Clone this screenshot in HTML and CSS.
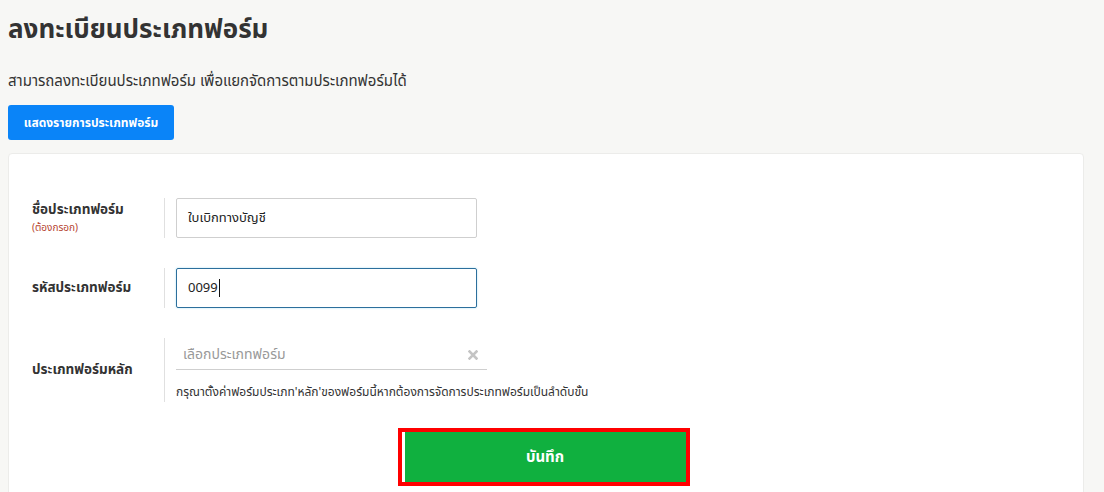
FILE: index.html
```html
<!DOCTYPE html>
<html lang="th">
<head>
<meta charset="utf-8">
<title>ลงทะเบียนประเภทฟอร์ม</title>
<link rel="stylesheet" href="styles.css">
</head>
<body>
<div class="page">
  <h1 class="title">ลงทะเบียนประเภทฟอร์ม</h1>
  <p class="subtitle">สามารถลงทะเบียนประเภทฟอร์ม เพื่อแยกจัดการตามประเภทฟอร์มได้</p>
  <button class="btn-list">แสดงรายการประเภทฟอร์ม</button>
  <div class="card">
    <div class="row">
      <div class="label">
        <div class="label-text">ชื่อประเภทฟอร์ม</div>
        <div class="required">(ต้องกรอก)</div>
      </div>
      <div class="field">
        <div class="input">ใบเบิกทางบัญชี</div>
      </div>
    </div>
    <div class="row">
      <div class="label">
        <div class="label-text">รหัสประเภทฟอร์ม</div>
      </div>
      <div class="field">
        <div class="input focus">0099<span class="caret"></span></div>
      </div>
    </div>
    <div class="row row-select">
      <div class="label">
        <div class="label-text">ประเภทฟอร์มหลัก</div>
      </div>
      <div class="field">
        <div class="select">
          <span class="placeholder">เลือกประเภทฟอร์ม</span>
          <svg class="clear" width="10" height="10" viewBox="0 0 10 10"><path d="M1.5 1.5 L8.5 8.5 M8.5 1.5 L1.5 8.5" stroke="#c4c4c4" stroke-width="2.6" stroke-linecap="square"/></svg>
        </div>
        <div class="help">กรุณาตั้งค่าฟอร์มประเภท'หลัก'ของฟอร์มนี้หากต้องการจัดการประเภทฟอร์มเป็นลำดับขั้น</div>
      </div>
    </div>
    <div class="actions">
      <div class="highlight">
        <button class="btn-save">บันทึก</button>
      </div>
    </div>
  </div>
</div>
</body>
</html>
```
FILE: styles.css
```css
html, body {
  margin: 0;
  padding: 0;
  background: #f7f7f5;
  font-family: Tahoma, "Noto Sans Thai", "Liberation Sans", "Noto Sans", sans-serif;
  color: #333;
}
.page {
  padding: 12px 20px 0 8px;
}
.title {
  margin: 0;
  font-size: 26px;
  font-weight: bold;
  line-height: 36px;
  color: #333;
}
.subtitle {
  margin: 24px 0 0;
  font-size: 15px;
  line-height: 20px;
}
.btn-list {
  margin-top: 13px;
  display: block;
  width: 166px;
  height: 35px;
  background: #0a84f8;
  border: none;
  border-radius: 3px;
  color: #fff;
  font-family: inherit;
  font-size: 12px;
  font-weight: bold;
  padding: 0;
}
.card {
  margin-top: 13px;
  background: #fff;
  border: 1px solid #ececea;
  border-radius: 4px;
  padding: 44px 24px 10px 23px;
}
.row {
  display: flex;
  align-items: stretch;
  margin-bottom: 30px;
}
.label {
  width: 132px;
  display: flex;
  flex-direction: column;
  justify-content: center;
  border-right: 1px solid #e0e0e0;
}
.label-text {
  font-size: 13.5px;
  font-weight: bold;
  line-height: 18px;
}
.required {
  font-size: 10px;
  color: #b5412e;
  line-height: 14px;
  margin-top: 2px;
}
.field {
  padding-left: 11px;
}
.input {
  width: 301px;
  height: 40px;
  box-sizing: border-box;
  border: 1px solid #cfcfcf;
  border-radius: 2px;
  padding: 0 11px;
  font-size: 13px;
  line-height: 38px;
  color: #222;
  display: flex;
  align-items: center;
}
.input.focus {
  border-color: #2c6f9c;
  box-shadow: 0 0 2px rgba(102, 200, 233, 0.6);
}
.caret {
  display: inline-block;
  width: 1px;
  height: 18px;
  background: #111;
  margin-left: 1px;
}
.row-select {
  margin-bottom: 26px;
}
.row-select .label {
  min-height: 64px;
}
.row-select .field {
  padding-top: 2px;
}
.select {
  width: 311px;
  height: 30px;
  box-sizing: border-box;
  border-bottom: 1px solid #cfcfcf;
  display: flex;
  align-items: center;
  justify-content: space-between;
  padding: 0 9px 0 7px;
}
.placeholder {
  font-size: 14px;
  color: #999;
}
.clear {
  display: block;
}
.help {
  margin-top: 14px;
  font-size: 12px;
  line-height: 16px;
  color: #333;
}
.actions {
  display: flex;
  justify-content: center;
  padding-right: 4px;
}
.highlight {
  border: 4px solid #f00;
  background: #fff;
  padding-left: 3px;
  display: flex;
}
.btn-save {
  width: 281px;
  height: 50px;
  background: #10b03f;
  border: none;
  color: #fff;
  font-family: inherit;
  font-size: 15px;
  font-weight: bold;
  padding: 0;
}
```
